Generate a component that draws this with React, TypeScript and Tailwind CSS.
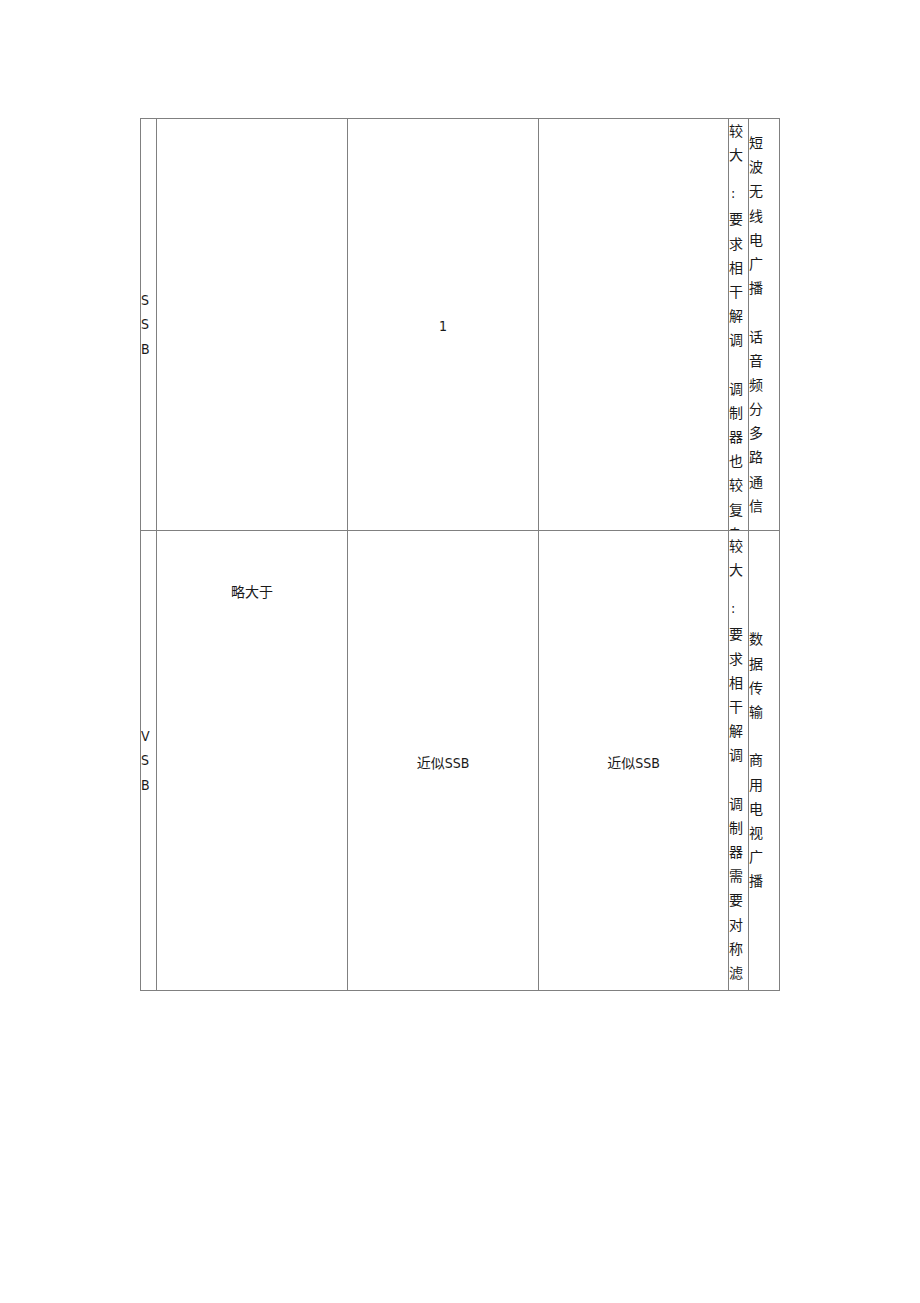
const font =
  "font-['Liberation_Sans_Narrow','DejaVu_Sans_Condensed','Roboto_Condensed','Noto_Sans_CJK_SC',sans-serif]";

const cell = 'border-l border-t border-[#808080] overflow-hidden';

function Line({ ch }: { ch: string }) {
  return <div className="h-[24.2px] leading-[24.2px] shrink-0">{ch === ' ' ? '\u00a0' : ch}</div>;
}

function Colon() {
  return (
    <div className="h-[40px] shrink-0 pt-[14px]">
      <div className="h-[24.2px] leading-[24.2px] pl-[2px]">:</div>
    </div>
  );
}

// narrow column: characters stacked one per line, colon line is taller
function Stack({ head, tail }: { head: string; tail: string }) {
  return (
    <>
      {head.split('').map((c, i) => (
        <Line key={'h' + i} ch={c} />
      ))}
      <Colon />
      {tail.split('').map((c, i) => (
        <Line key={'t' + i} ch={c} />
      ))}
    </>
  );
}

function Centered({ text }: { text: string }) {
  return (
    <div className="flex h-full flex-col justify-center">
      {text.split('').map((c, i) => (
        <Line key={i} ch={c} />
      ))}
    </div>
  );
}

export default function App() {
  return (
    <div className={`min-h-[1303px] w-full bg-white text-[14px] text-[#1a1a1a] ${font}`}>
      <div className="pt-[118px] pl-[140px]">
        <div className="grid w-[640px] grid-cols-[16px_191px_191px_190px_20px_31px] grid-rows-[412px_460px] border-r border-b border-[#808080]">
          {/* SSB */}
          <div className={cell}>
            <Centered text="SSB" />
          </div>
          <div className={cell}></div>
          <div className={`${cell} flex items-center justify-center`}>
            <span className="leading-[24.2px] pt-[4px]">1</span>
          </div>
          <div className={cell}></div>
          <div className={`${cell} flex flex-col`}>
            <Stack head="较大" tail="要求相干解调 调制器也较复杂" />
          </div>
          <div className={cell}>
            <Centered text="短波无线电广播 话音频分多路通信" />
          </div>

          {/* VSB */}
          <div className={cell}>
            <Centered text="VSB" />
          </div>
          <div className={`${cell} flex flex-col items-center pt-[49px]`}>
            <div className="leading-[24.2px]">略大于</div>
          </div>
          <div className={`${cell} flex items-center justify-center`}>
            <span className="leading-[24.2px] pt-[6px]">近似SSB</span>
          </div>
          <div className={`${cell} flex items-center justify-center`}>
            <span className="leading-[24.2px] pt-[6px]">近似SSB</span>
          </div>
          <div className={`${cell} flex flex-col pt-[3px]`}>
            <Stack head="较大" tail="要求相干解调 调制器需要对称滤波" />
          </div>
          <div className={cell}>
            <Centered text="数据传输 商用电视广播" />
          </div>
        </div>
      </div>
    </div>
  );
}
